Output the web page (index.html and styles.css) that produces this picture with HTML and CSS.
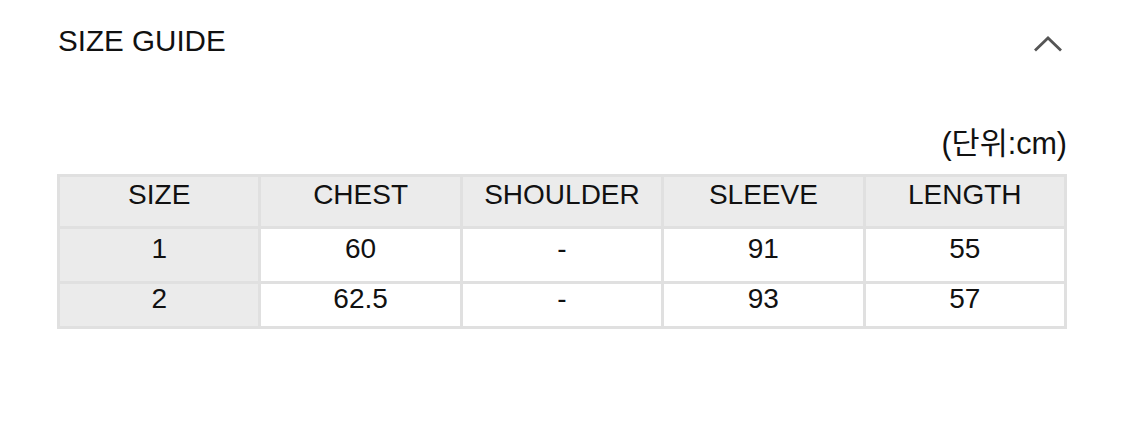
FILE: index.html
```html
<!DOCTYPE html>
<html lang="ko">
<head>
<meta charset="utf-8">
<title>Size Guide</title>
<link rel="stylesheet" href="styles.css">
</head>
<body>
<div class="page">
  <div class="header">
    <h2 class="title">SIZE GUIDE</h2>
    <svg class="chevron" width="30" height="18" viewBox="0 0 30 18" aria-hidden="true">
      <path d="M2 15.5 L15 3 L28 15.5" fill="none" stroke="#555" stroke-width="2.8" stroke-linecap="butt" stroke-linejoin="miter"/>
    </svg>
  </div>
  <div class="unit">(단위:cm)</div>
  <table class="size-table">
    <tr class="row-head">
      <th>SIZE</th><th>CHEST</th><th>SHOULDER</th><th>SLEEVE</th><th>LENGTH</th>
    </tr>
    <tr class="row-1">
      <th>1</th><td>60</td><td>-</td><td>91</td><td>55</td>
    </tr>
    <tr class="row-2">
      <th>2</th><td>62.5</td><td>-</td><td>93</td><td>57</td>
    </tr>
  </table>
</div>
</body>
</html>
```
FILE: styles.css
```css
html, body {
  margin: 0;
  padding: 0;
  background: #fff;
}
body {
  font-family: "Liberation Sans", Arial, "Noto Sans CJK KR", sans-serif;
  color: #111;
}
.page {
  width: 1010px;
  padding: 21px 0 0 57px;
}
.header {
  display: flex;
  justify-content: space-between;
  align-items: center;
  height: 40px;
}
.title {
  margin: 0 0 0 1px;
  font-size: 29.6px;
  font-weight: normal;
  line-height: 40px;
  color: #111;
}
.chevron {
  margin-right: 4px;
  margin-top: 6px;
}
.unit {
  margin-top: 66px;
  text-align: right;
  font-size: 30.5px;
  line-height: 32px;
  font-family: "Liberation Sans", "Noto Sans CJK KR", sans-serif;
  color: #111;
}
.size-table {
  margin-top: 15px;
  width: 1010px;
  border-collapse: collapse;
  table-layout: fixed;
  border: 3px solid #e0e0e0;
}
.size-table th,
.size-table td {
  border: 3px solid #e0e0e0;
  font-size: 28px;
  font-weight: normal;
  text-align: center;
  vertical-align: top;
  padding: 0;
  color: #111;
}
.size-table th {
  background: #ebebeb;
}
.size-table td {
  background: #fff;
}
.row-head th { height: 49px; line-height: 36px; }
.row-1 th, .row-1 td { height: 52px; line-height: 40px; }
.row-2 th, .row-2 td { height: 42px; line-height: 30px; }
```
